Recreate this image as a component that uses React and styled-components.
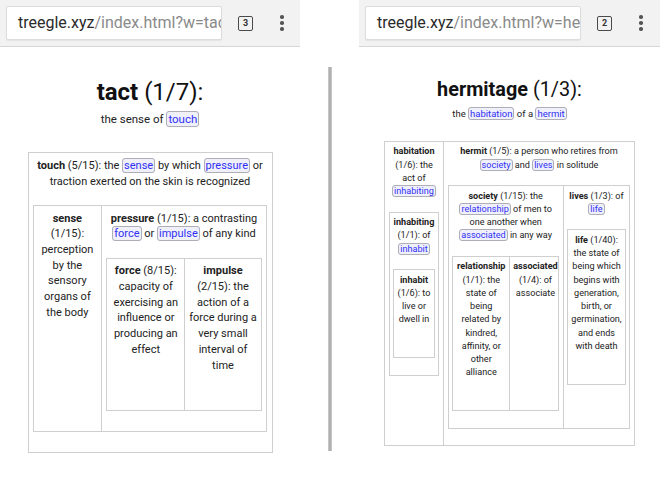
import React from 'react'
import styled, {createGlobalStyle} from 'styled-components'

const Global = createGlobalStyle`
    html, body {
        margin: 0;
        padding: 0;
        background: #fff;
    }
    body {
        font-family: Roboto, "Noto Sans", "Liberation Sans", sans-serif;
        color: #222;
    }
`

const Screen = styled.div`
    display: flex;
    width: 660px;
    height: 483px;
    overflow: hidden;
    background: #fff;
`

const Phone = styled.div`
    flex: 0 0 ${p => p.$width}px;
    font-size: ${p => p.$base}px;
    --lh: ${p => p.$lh}px;
`

// grey rule between the two screenshots
const Gutter = styled.div`
    flex: 0 0 59px;
    display: flex;
    justify-content: center;
`
const Rule = styled.div`
    width: 4px;
    height: 384px;
    margin-top: 67px;
    background: linear-gradient(to right, #cfcfcf, #a6a6a6 50%, #cfcfcf);
`

// Chrome toolbar
const Toolbar = styled.div`
    display: flex;
    align-items: center;
    height: 46px;
    padding-left: 6px;
    background: #f2f2f2;
    border-bottom: 1px solid #d6d6d6;
    font-size: 16px;
`
const Address = styled.div`
    flex: 0 0 216px;
    height: 34px;
    box-sizing: border-box;
    padding: 0 4px 0 11px;
    background: #fff;
    border: 1px solid #dcdcdc;
    border-radius: 2px;
    box-shadow: 0 1px 1px rgba(0,0,0,0.06);
    line-height: 32px;
    white-space: nowrap;
    overflow: hidden;
`
const Host = styled.span`
    color: #2a2a2a;
`
const Path = styled.span`
    color: #8a8a8a;
`
const TabCount = styled.div`
    width: 15px;
    height: 15px;
    box-sizing: border-box;
    margin-left: 16px;
    border: 1.5px solid #4a4a4a;
    border-radius: 2px;
    font-size: 9px;
    font-weight: bold;
    line-height: 12px;
    text-align: center;
    color: #333;
`
const Menu = styled.div`
    display: flex;
    flex-direction: column;
    gap: 2.5px;
    margin-left: 27px;
`
const Dot = styled.span`
    width: 3.5px;
    height: 3.5px;
    border-radius: 50%;
    background: #555;
`

// page content
const Title = styled.h1`
    margin: 31px 0 0;
    font-size: 2.18em;
    font-weight: normal;
    text-align: center;
    color: #111;
`
const Word = styled.b`
    font-weight: bold;
`
const Subtitle = styled.div`
    margin-top: 6px;
    font-size: 1.045em;
    line-height: var(--lh);
    text-align: center;
`
const Table = styled.div`
    display: grid;
    grid-template-columns: ${p => p.$cols || '1fr'};
    width: ${p => (p.$width ? p.$width + 'px' : 'auto')};
    margin: ${p => (p.$root ? '2.25em auto 0' : '1.45em 0.07em 0')};
    border: 1px solid #cfcfcf;
    box-sizing: border-box;
`
const Cell = styled.div`
    padding: 0.4em 0.33em ${p => (p.$leaf ? '3.36em' : '1.82em')};
    text-align: center;
    & + & {
        border-left: 1px solid #cfcfcf;
    }
`
const Def = styled.div`
    line-height: var(--lh);
`
const Link = styled.span`
    padding: 0 1px;
    border: 1px solid #aeaeb8;
    border-radius: 3px;
    background: #f0f0fa;
    color: #3030f5;
`

// "[word]" marks a link inside a definition
const Text = ({children}) =>
    children.split(/(\[[^\]]+\])/).map((part, i) =>
        part.startsWith('[')
            ? <Link key={i}>{part.slice(1, -1)}</Link>
            : <React.Fragment key={i}>{part}</React.Fragment>
    )

const Node = ({node}) => (
    <Cell $leaf={!node.kids}>
        <Def>
            <Word>{node.w}</Word> ({node.r}): <Text>{node.d}</Text>
        </Def>
        {node.kids && (
            <Table $cols={node.cols}>
                {node.kids.map(k => <Node key={k.w} node={k} />)}
            </Table>
        )}
    </Cell>
)

const tact = {
    w: 'tact', r: '1/7', d: 'the sense of [touch]',
    width: 245, cols: '1fr',
    kids: [
        {
            w: 'touch', r: '5/15',
            d: 'the [sense] by which [pressure] or traction exerted on the skin is recognized',
            cols: '67px 1fr',
            kids: [
                {w: 'sense', r: '1/15', d: 'perception by the sensory organs of the body'},
                {
                    w: 'pressure', r: '1/15', d: 'a contrasting [force] or [impulse] of any kind',
                    cols: '77px 1fr',
                    kids: [
                        {w: 'force', r: '8/15', d: 'capacity of exercising an influence or producing an effect'},
                        {w: 'impulse', r: '2/15', d: 'the action of a force during a very small interval of time'},
                    ],
                },
            ],
        },
    ],
}

const hermitage = {
    w: 'hermitage', r: '1/3', d: 'the [habitation] of a [hermit]',
    width: 251, cols: '58px 1fr',
    kids: [
        {
            w: 'habitation', r: '1/6', d: 'the act of [inhabiting]',
            kids: [
                {
                    w: 'inhabiting', r: '1/1', d: 'of [inhabit]',
                    kids: [
                        {w: 'inhabit', r: '1/6', d: 'to live or dwell in'},
                    ],
                },
            ],
        },
        {
            w: 'hermit', r: '1/5', d: 'a person who retires from [society] and [lives] in solitude',
            cols: '114px 1fr',
            kids: [
                {
                    w: 'society', r: '1/15',
                    d: 'the [relationship] of men to one another when [associated] in any way',
                    cols: '56px 1fr',
                    kids: [
                        {w: 'relationship', r: '1/1', d: 'the state of being related by kindred, affinity, or other alliance'},
                        {w: 'associated', r: '1/4', d: 'of associate'},
                    ],
                },
                {
                    w: 'lives', r: '1/3', d: 'of [life]',
                    kids: [
                        {w: 'life', r: '1/40', d: 'the state of being which begins with generation, birth, or germination, and ends with death'},
                    ],
                },
            ],
        },
    ],
}

const Browser = ({width, base, lh, tabs, page}) => (
    <Phone $width={width} $base={base} $lh={lh}>
        <Toolbar>
            <Address>
                <Host>treegle.xyz</Host><Path>/index.html?w={page.w}</Path>
            </Address>
            <TabCount>{tabs}</TabCount>
            <Menu><Dot /><Dot /><Dot /></Menu>
        </Toolbar>
        <Title><Word>{page.w}</Word> ({page.r}):</Title>
        <Subtitle><Text>{page.d}</Text></Subtitle>
        <Table $root $width={page.width} $cols={page.cols}>
            {page.kids.map(k => <Node key={k.w} node={k} />)}
        </Table>
    </Phone>
)

const App = () => (
    <Screen>
        <Global />
        <Browser width={300} base={11} lh={15.7} tabs={3} page={tact} />
        <Gutter><Rule /></Gutter>
        <Browser width={301} base={9.1} lh={13.25} tabs={2} page={hermitage} />
    </Screen>
)

export default App
